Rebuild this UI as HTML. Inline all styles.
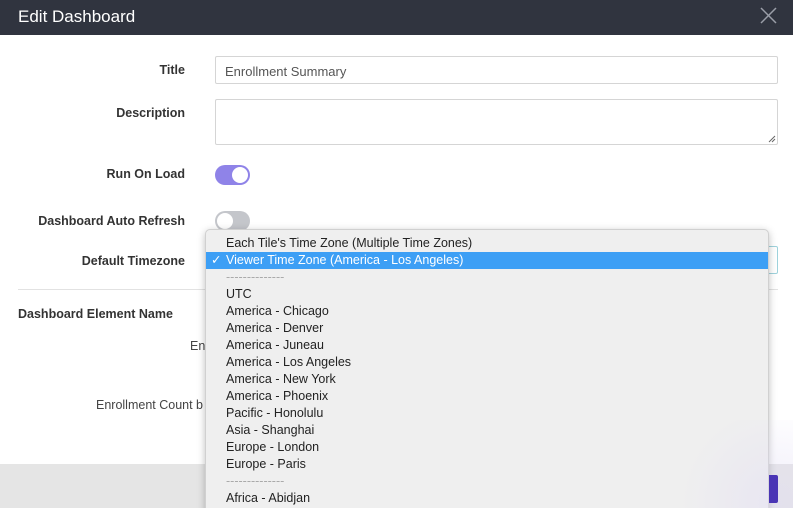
<!DOCTYPE html>
<html><head><meta charset="utf-8"><style>
*{box-sizing:border-box;margin:0;padding:0}
html,body{width:793px;height:508px;overflow:hidden}
body{background:#fff;font-family:"Liberation Sans",sans-serif;position:relative}
.hdr{position:absolute;left:0;top:0;width:793px;height:35px;background:#30343f;color:#fff;font-size:17px;line-height:33px;padding-left:18px}
.lbl{position:absolute;right:608px;font-size:12.5px;font-weight:bold;color:#333;text-align:right;white-space:nowrap}
.inp{position:absolute;left:215px;width:563px;border:1px solid #d5d5d5;border-radius:2px;background:#fff}
.tog{position:absolute;left:215px;width:35px;height:20px;border-radius:10px}
.tog i{position:absolute;top:2px;width:16px;height:16px;border-radius:50%;background:#fff}
.dd{position:absolute;left:205px;top:229px;width:564px;height:290px;background:#efefef;border:1px solid #d0d0d0;border-radius:5px;box-shadow:0 2px 8px rgba(0,0,0,.25);font-size:12.5px;color:#222}
.dd div{height:17px;line-height:17px;padding-left:20px;position:relative;white-space:nowrap}
.dd .sel{background:#3d9ff5;color:#fff}
.dd .sep{color:#aaa}
</style></head><body>
<div class="hdr">Edit Dashboard</div>
<svg style="position:absolute;left:760px;top:7px" width="17" height="17"><path d="M1 1L16 16M16 1L1 16" stroke="#9a9ea8" stroke-width="1.5"/></svg>

<div class="lbl" style="top:63px">Title</div>
<div class="inp" style="top:56px;height:28px;font-size:13px;color:#555;padding:7px 9px">Enrollment Summary</div>
<div class="lbl" style="top:106px">Description</div>
<div class="inp" style="top:99px;height:46px"><svg style="position:absolute;right:1px;bottom:1px" width="8" height="8"><path d="M7 1L1 7M7 4L4 7" stroke="#666" stroke-width="1"/></svg></div>
<div class="lbl" style="top:167px">Run On Load</div>
<div class="tog" style="top:165px;background:#8f83e8"><i style="left:17px"></i></div>
<div class="lbl" style="top:214px">Dashboard Auto Refresh</div>
<div class="tog" style="top:211px;background:#c4c6cb"><i style="left:2px"></i></div>
<div class="lbl" style="top:254px">Default Timezone</div>
<div class="inp" style="top:246px;height:28px;border-color:#9fd3dc"></div>
<div style="position:absolute;left:18px;top:289px;width:760px;height:1px;background:#e2e2e2"></div>
<div style="position:absolute;left:18px;top:307px;font-size:12.5px;font-weight:bold;color:#333">Dashboard Element Name</div>
<div style="position:absolute;left:190px;top:339px;font-size:12.5px;color:#444">Enr</div>
<div style="position:absolute;left:96px;top:398px;font-size:12.5px;color:#444">Enrollment Count b</div>
<div style="position:absolute;left:0;top:464px;width:793px;height:44px;background:#e5e5e5"></div>

<div class="dd">
<div style="margin-top:5px">Each Tile's Time Zone (Multiple Time Zones)</div>
<div class="sel"><span style="position:absolute;left:5px">✓</span>Viewer Time Zone (America - Los Angeles)</div>
<div class="sep">--------------</div>
<div>UTC</div>
<div>America - Chicago</div>
<div>America - Denver</div>
<div>America - Juneau</div>
<div>America - Los Angeles</div>
<div>America - New York</div>
<div>America - Phoenix</div>
<div>Pacific - Honolulu</div>
<div>Asia - Shanghai</div>
<div>Europe - London</div>
<div>Europe - Paris</div>
<div class="sep">--------------</div>
<div>Africa - Abidjan</div>
</div>
<div style="position:absolute;left:640px;top:420px;width:153px;height:88px;background:radial-gradient(circle at 90% 95%,rgba(225,220,245,.5),rgba(225,220,245,0) 60%);pointer-events:none"></div>
<div style="position:absolute;left:769px;top:475px;width:9px;height:28px;background:#4a35b5;border-radius:0 2px 2px 0;z-index:5"></div>
</body></html>
